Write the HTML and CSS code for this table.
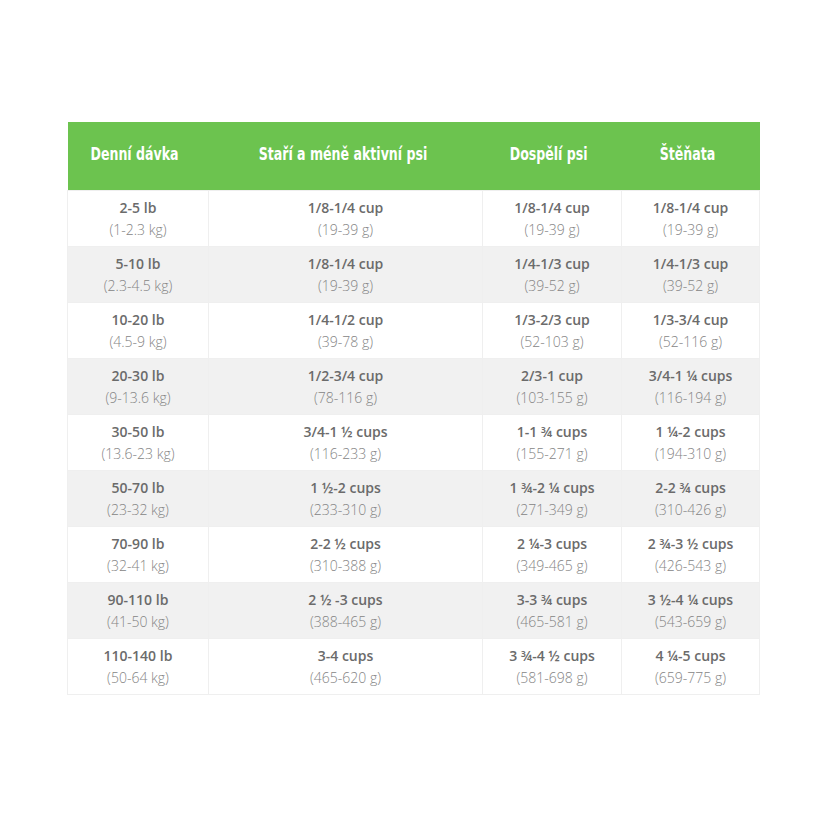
FILE: index.html
```html
<!DOCTYPE html>
<html lang="cs">
<head>
<meta charset="utf-8">
<title>Denní dávka</title>
<link rel="stylesheet" href="styles.css">
</head>
<body>
<div class="wrap">
<table class="feed">
<colgroup>
<col class="c1"><col class="c2"><col class="c3"><col class="c4">
</colgroup>
<thead>
<tr><th><span>Denní dávka</span></th><th><span>Staří a méně aktivní psi</span></th><th><span>Dospělí psi</span></th><th><span>Štěňata</span></th></tr>
</thead>
<tbody>
<tr><td><b>2-5 lb</b><span>(1-2.3 kg)</span></td><td><b>1/8-1/4 cup</b><span>(19-39 g)</span></td><td><b>1/8-1/4 cup</b><span>(19-39 g)</span></td><td><b>1/8-1/4 cup</b><span>(19-39 g)</span></td></tr>
<tr><td><b>5-10 lb</b><span>(2.3-4.5 kg)</span></td><td><b>1/8-1/4 cup</b><span>(19-39 g)</span></td><td><b>1/4-1/3 cup</b><span>(39-52 g)</span></td><td><b>1/4-1/3 cup</b><span>(39-52 g)</span></td></tr>
<tr><td><b>10-20 lb</b><span>(4.5-9 kg)</span></td><td><b>1/4-1/2 cup</b><span>(39-78 g)</span></td><td><b>1/3-2/3 cup</b><span>(52-103 g)</span></td><td><b>1/3-3/4 cup</b><span>(52-116 g)</span></td></tr>
<tr><td><b>20-30 lb</b><span>(9-13.6 kg)</span></td><td><b>1/2-3/4 cup</b><span>(78-116 g)</span></td><td><b>2/3-1 cup</b><span>(103-155 g)</span></td><td><b>3/4-1 ¼ cups</b><span>(116-194 g)</span></td></tr>
<tr><td><b>30-50 lb</b><span>(13.6-23 kg)</span></td><td><b>3/4-1 ½ cups</b><span>(116-233 g)</span></td><td><b>1-1 ¾ cups</b><span>(155-271 g)</span></td><td><b>1 ¼-2 cups</b><span>(194-310 g)</span></td></tr>
<tr><td><b>50-70 lb</b><span>(23-32 kg)</span></td><td><b>1 ½-2 cups</b><span>(233-310 g)</span></td><td><b>1 ¾-2 ¼ cups</b><span>(271-349 g)</span></td><td><b>2-2 ¾ cups</b><span>(310-426 g)</span></td></tr>
<tr><td><b>70-90 lb</b><span>(32-41 kg)</span></td><td><b>2-2 ½ cups</b><span>(310-388 g)</span></td><td><b>2 ¼-3 cups</b><span>(349-465 g)</span></td><td><b>2 ¾-3 ½ cups</b><span>(426-543 g)</span></td></tr>
<tr><td><b>90-110 lb</b><span>(41-50 kg)</span></td><td><b>2 ½ -3 cups</b><span>(388-465 g)</span></td><td><b>3-3 ¾ cups</b><span>(465-581 g)</span></td><td><b>3 ½-4 ¼ cups</b><span>(543-659 g)</span></td></tr>
<tr><td><b>110-140 lb</b><span>(50-64 kg)</span></td><td><b>3-4 cups</b><span>(465-620 g)</span></td><td><b>3 ¾-4 ½ cups</b><span>(581-698 g)</span></td><td><b>4 ¼-5 cups</b><span>(659-775 g)</span></td></tr>
</tbody>
</table>
</div>
</body>
</html>
```
FILE: styles.css
```css
html, body { margin: 0; padding: 0; background: #fff; }
.wrap { padding: 122px 0 0 67px; }
.feed {
  border-collapse: collapse;
  table-layout: fixed;
  width: 692px;
  font-family: "Open Sans", "Noto Sans", sans-serif;
}
.c1 { width: 141px; }
.c2 { width: 274px; }
.c3 { width: 139px; }
.c4 { width: 138px; }
.feed th {
  background: #6cc34f;
  color: #fff;
  height: 64px;
  padding: 0 6px 4px 0;
  font-family: "DejaVu Sans", sans-serif;
  font-weight: bold;
  font-size: 17px;
  text-align: center;
  vertical-align: middle;
  white-space: nowrap;
}
.feed th span {
  display: inline-block;
  transform: scaleX(0.74);
}
.feed td {
  height: 55px;
  padding: 0;
  text-align: center;
  vertical-align: middle;
  border: 1px solid #efefef;
  line-height: 22px;
}
.feed tbody tr:nth-child(even) td { background: #f1f1f1; }
.feed td b {
  display: block;
  font-weight: 600;
  font-size: 14px;
  color: #6b6b6b;
}
.feed td span {
  display: block;
  font-weight: 300;
  font-size: 14px;
  color: #858585;
}
```
